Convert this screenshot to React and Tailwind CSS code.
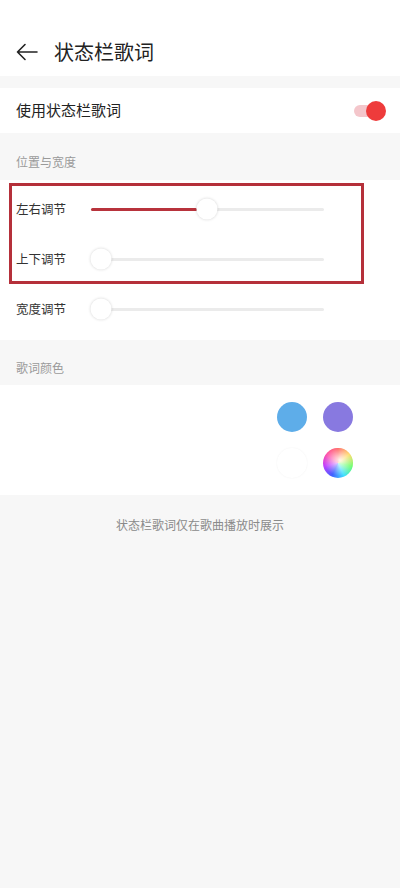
import { useState } from 'react';

const font = { fontFamily: '"Noto Sans CJK SC", "Noto Sans", sans-serif' };

function Slider({ label, value }) {
    return (
        <div className="h-[50px] flex items-center px-4">
            <span className="w-[75px] text-[12.5px] text-[#333]">{label}</span>
            <div className="relative w-[233px] h-[3px] bg-[#ebebeb] rounded-full">
                <div className="absolute left-0 top-0 h-[3.5px] bg-[#b8333c] rounded-full" style={{ width: `${value * 233}px` }} />
                <div
                    className="absolute top-1/2 -translate-y-1/2 -translate-x-1/2 w-[21px] h-[21px] rounded-full bg-white shadow-[0_0_3px_rgba(0,0,0,0.18)]"
                    style={{ left: `${value * 233 + 10}px` }}
                />
            </div>
        </div>
    );
}

export default function App() {
    const [on, setOn] = useState(true);

    return (
        <div className="min-h-[888px] bg-[#f7f7f7]" style={font}>
            {/* Header */}
            <header className="bg-white pt-[28px] h-[76px] flex items-center px-4">
                <svg width="22" height="18" viewBox="0 0 22 18" fill="none" stroke="#222" strokeWidth="1.6" strokeLinecap="round" strokeLinejoin="round">
                    <path d="M21 9H1.5M9 1.5L1.5 9L9 16.5" />
                </svg>
                <h1 className="ml-[16px] text-[20px] text-[#222]">状态栏歌词</h1>
            </header>

            <div className="mt-[12px] bg-white h-[45px] flex items-center justify-between px-4">
                <span className="text-[15px] text-[#222]">使用状态栏歌词</span>
                <button onClick={() => setOn(!on)} className="relative w-[34px] h-[20px] mr-[-2px]">
                    <span className="absolute left-[2px] right-[4px] top-1/2 -translate-y-1/2 h-[12px] rounded-full bg-[#f4c6cb]" />
                    <span className={`absolute top-0 w-[20px] h-[20px] rounded-full bg-[#ee3b3b] ${on ? 'right-0' : 'left-0'}`} />
                </button>
            </div>

            <div className="h-[47px] flex items-end px-4 pb-[9px] text-[12px] text-[#9a9a9a]">位置与宽度</div>

            <div className="bg-white pt-[4px] pb-[6px]">
                <div className="relative">
                    <Slider label="左右调节" value={0.455} />
                    <Slider label="上下调节" value={0} />
                    {/* annotation box */}
                    <div className="absolute left-[9px] top-[-1px] w-[355px] h-[101px] border-[3px] border-[#b5303a]" />
                </div>
                <Slider label="宽度调节" value={0} />
            </div>

            <div className="h-[45px] flex items-end px-4 pb-[8px] text-[12px] text-[#9a9a9a]">歌词颜色</div>

            <div className="bg-white h-[110px] flex justify-end items-center pr-[47px]">
                <div className="grid grid-cols-2 gap-[16px]">
                    <div className="w-[30px] h-[30px] rounded-full bg-[#5eade9]" />
                    <div className="w-[30px] h-[30px] rounded-full bg-[#8879e0]" />
                    <div className="w-[30px] h-[30px] rounded-full bg-white shadow-[0_0_2px_rgba(0,0,0,0.06)]" />
                    <div className="w-[30px] h-[30px] rounded-full overflow-hidden bg-[conic-gradient(from_0deg,#ff4040,#ffd040,#60ff60,#40e0ff,#4060ff,#c040ff,#ff40a0,#ff4040)]">
                        <div className="w-full h-full rounded-full bg-[radial-gradient(circle_at_55%_40%,rgba(255,255,255,0.9),rgba(255,255,255,0)_65%)]" />
                    </div>
                </div>
            </div>

            <p className="mt-[21px] text-center text-[12px] text-[#8a8a8a]">状态栏歌词仅在歌曲播放时展示</p>
        </div>
    );
}
